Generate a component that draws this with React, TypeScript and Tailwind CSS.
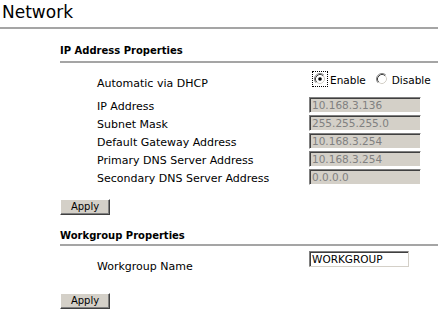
import { useState } from "react";

type FieldRow = {
  label: string;
  value: string;
};

const ipFields: FieldRow[] = [
  { label: "IP Address", value: "10.168.3.136" },
  { label: "Subnet Mask", value: "255.255.255.0" },
  { label: "Default Gateway Address", value: "10.168.3.254" },
  { label: "Primary DNS Server Address", value: "10.168.3.254" },
  { label: "Secondary DNS Server Address", value: "0.0.0.0" },
];

// classic win98-ish radio
function RadioDot({ checked }: { checked: boolean }) {
  return (
    <svg width="12" height="12" viewBox="0 0 12 12" className="block">
      <circle cx="6" cy="6" r="5.5" fill="#fff" />
      <path d="M2.11 9.89 A5.5 5.5 0 0 1 9.89 2.11" fill="none" stroke="#808080" />
      <path d="M9.89 2.11 A5.5 5.5 0 0 1 2.11 9.89" fill="none" stroke="#fff" />
      <path d="M2.82 9.18 A4.5 4.5 0 0 1 9.18 2.82" fill="none" stroke="#404040" />
      <path d="M9.18 2.82 A4.5 4.5 0 0 1 2.82 9.18" fill="none" stroke="#d4d0c8" />
      {checked && <circle cx="6" cy="6" r="1.8" fill="#000" />}
    </svg>
  );
}

function ApplyButton({ className }: { className: string }) {
  return (
    <div className={`${className} flex`}>
      <button
        type="button"
        className="w-[50px] h-[16px] bg-[#d4d0c8] border border-t-white border-l-white border-r-[#404040] border-b-[#404040] shadow-[inset_-1px_-1px_0_#808080] text-[10px] leading-[12px] text-black"
      >
        Apply
      </button>
    </div>
  );
}

function SectionHeader({ title, className }: { title: string; className: string }) {
  return (
    <div className={`${className} border-b-2 border-[#a5a5a5]`}>
      <h2 className="text-[10px] leading-[13px] font-bold">{title}</h2>
    </div>
  );
}

export default function App() {
  const [dhcp, setDhcp] = useState(true);
  const [workgroup, setWorkgroup] = useState("WORKGROUP");

  return (
    <div className="w-[438px] h-[316px] overflow-hidden bg-white text-black font-['DejaVu_Sans',Verdana,sans-serif]">
      {/* Title */}
      <div className="h-[29px] pl-[2px] pt-[2px] border-b-2 border-[#a5a5a5]">
        <h1 className="text-[17px] leading-[20px]">Network</h1>
      </div>

      <div className="ml-[60px]">
        {/* IP Address Properties */}
        <SectionHeader title="IP Address Properties" className="mt-[15px] h-[19px]" />

        <div className="mt-[14px] h-[13px] mb-[6px] flex items-start">
          <div className="w-[249px] pl-[37px] text-[11px] leading-[13px]">
            Automatic via DHCP
          </div>
          <div className="-mt-[6px] flex items-start text-[10.5px] leading-[14px]">
            <button
              type="button"
              onClick={() => setDhcp(true)}
              className="ml-[3px] flex items-start"
            >
              <span className={`p-px border border-dotted ${dhcp ? "border-black" : "border-transparent"}`}>
                <RadioDot checked={dhcp} />
              </span>
              <span className="ml-[2px] mt-[2px]">Enable</span>
            </button>
            <button
              type="button"
              onClick={() => setDhcp(false)}
              className="ml-[8px] flex items-start"
            >
              <span className={`p-px border border-dotted ${!dhcp ? "border-black" : "border-transparent"}`}>
                <RadioDot checked={!dhcp} />
              </span>
              <span className="ml-[2px] mt-[2px]">Disable</span>
            </button>
          </div>
        </div>

        {ipFields.map((f) => (
          <div key={f.label} className="h-[18px] flex items-center">
            <div className="w-[249px] pl-[37px] pt-[2px] text-[11px] leading-[13px]">
              {f.label}
            </div>
            <input
              type="text"
              value={f.value}
              readOnly
              className="w-[112px] h-[16px] px-[2px] bg-[#d4d0c8] text-[#808080] text-[10.5px] border border-t-[#808080] border-l-[#808080] border-r-white border-b-white shadow-[inset_1px_1px_0_#404040] outline-none"
            />
          </div>
        ))}

        <ApplyButton className="mt-[13px]" />

        {/* Workgroup Properties */}
        <SectionHeader title="Workgroup Properties" className="mt-[14px] h-[17px]" />

        <div className="h-[30px] flex items-start">
          <div className="w-[249px] pl-[37px] pt-[14px] text-[11px] leading-[13px]">
            Workgroup Name
          </div>
          <input
            type="text"
            value={workgroup}
            onChange={(e) => setWorkgroup(e.target.value)}
            className="mt-[5px] w-[100px] h-[16px] px-[2px] bg-white text-black text-[10.5px] border border-t-[#808080] border-l-[#808080] border-r-[#d4d0c8] border-b-[#d4d0c8] shadow-[inset_1px_1px_0_#404040] outline-none"
          />
        </div>

        <ApplyButton className="mt-[17px]" />
      </div>
    </div>
  );
}
